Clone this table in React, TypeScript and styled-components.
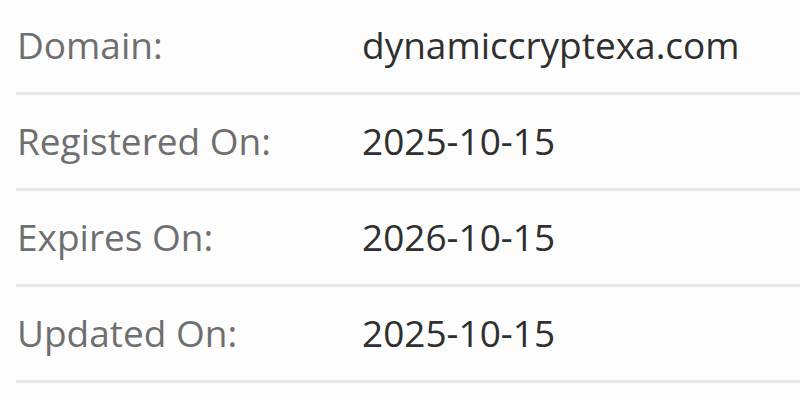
import styled, { createGlobalStyle } from 'styled-components';

const colors = {
  background: '#fdfdfd',
  label: '#6f6f6f',
  value: '#2f2f2f',
  border: '#e8e8e8',
};

const GlobalStyle = createGlobalStyle`
  html, body {
    margin: 0;
    padding: 0;
    background: ${colors.background};
    font-family: "Open Sans", "Noto Sans", sans-serif;
    overflow: hidden;
  }
`;

const Table = styled.div`
  margin: -1px 0 0 16px;
  display: flex;
  flex-direction: column;
`;

const Row = styled.div`
  height: 96px;
  box-sizing: border-box;
  display: grid;
  grid-template-columns: 346px 1fr;
  align-items: center;
  border-bottom: 3px solid ${colors.border};
  font-size: 37px;
  padding-bottom: 2px;
`;

const Label = styled.div`
  color: ${colors.label};
  padding-left: 1px;
`;

const Value = styled.div`
  color: ${colors.value};
`;

const rows = [
  { label: 'Domain:', value: 'dynamiccryptexa.com' },
  { label: 'Registered On:', value: '2025-10-15' },
  { label: 'Expires On:', value: '2026-10-15' },
  { label: 'Updated On:', value: '2025-10-15' },
];

export default function App() {
  return (
    <>
      <GlobalStyle />
      <Table>
        {rows.map(row => (
          <Row key={row.label}>
            <Label>{row.label}</Label>
            <Value>{row.value}</Value>
          </Row>
        ))}
      </Table>
    </>
  );
}
